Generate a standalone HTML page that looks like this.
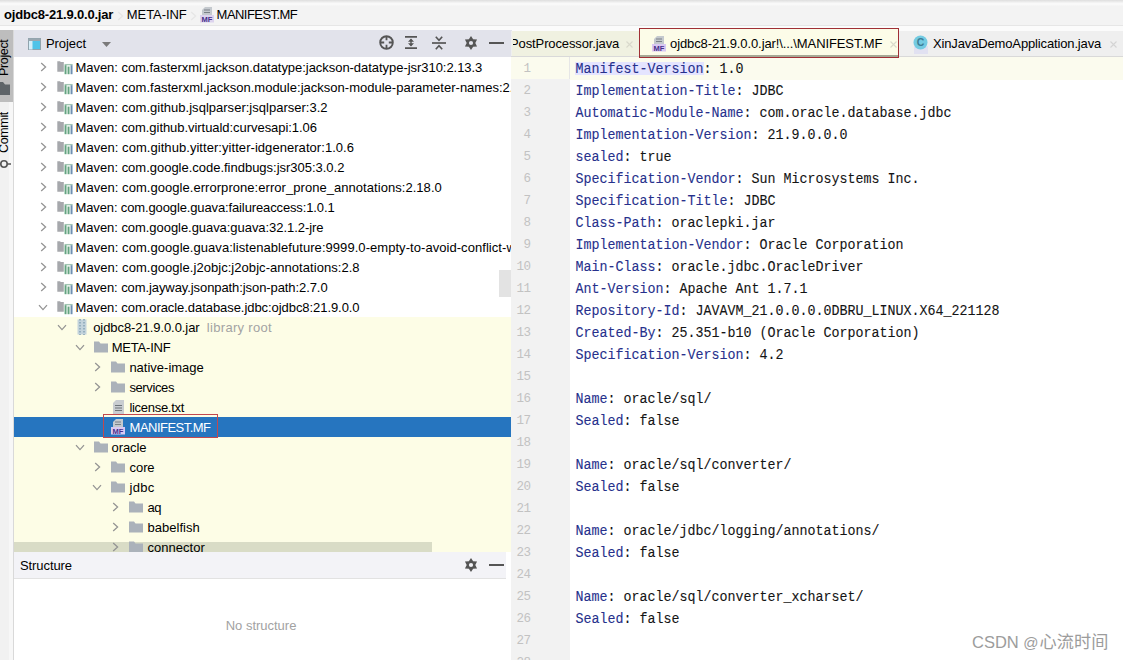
<!DOCTYPE html><html><head><meta charset="utf-8"><title>MANIFEST.MF</title><style>
*{box-sizing:border-box;margin:0;padding:0}
html,body{width:1123px;height:660px;overflow:hidden;background:#fff}
body{position:relative;font-family:"Liberation Sans","Noto Sans CJK SC",sans-serif;font-size:13px;color:#000}
.a{position:absolute}
.t{position:absolute;height:20px;line-height:20px;white-space:nowrap}
#nav{left:0;top:0;width:1123px;height:30px;background:#f3f3f3}
#navtop{left:0;top:0;width:1123px;height:6px;background:linear-gradient(#dedede 0,#ececec 30%,#f9f9f9 55%,#f9f9f9 80%,#f3f3f3 100%)}
#navline{left:0;top:24.5px;width:1123px;height:5.5px;background:linear-gradient(#e6e6e6 0,#e6e6e6 27%,#fbfbfb 28%,#fbfbfb 100%)}
#strip{left:0;top:30px;width:14px;height:630px;background:linear-gradient(to right,#f1f1f1 0,#f1f1f1 8.5px,#f7f7f7 9.5px,#f7f7f7 100%);border-right:1px solid #d9d9d9}
#stripsel{left:0;top:30px;width:13px;height:72px;background:#bdbdbd}
.vt{position:absolute;transform-origin:0 0;transform:rotate(-90deg);white-space:nowrap;font-size:12.5px;letter-spacing:-0.35px;line-height:14px;height:14px}
#phead{left:14px;top:30px;width:497.5px;height:27px;background:#e2e3eb}
#tree{left:14px;top:57px;width:497px;height:495px;background:#fff;overflow:hidden}
#treey{left:14px;top:317px;width:497px;height:235px;background:#fdfde6}
#sel{left:14px;top:417px;width:497px;height:20px;background:#2675bf}
#redbox{left:103px;top:414px;width:115px;height:24px;border:1px solid #c2484e}
#hsb{left:14px;top:542px;width:497px;height:10px;background:#f6f6e0}
#hthumb{left:14px;top:542px;width:418px;height:10px;background:#d9dcc6}
#vthumb{left:499px;top:269.5px;width:12px;height:27px;background:#e3e3e3}
#shead{left:14px;top:552px;width:492px;height:27.6px;background:#f3f3f7;border-bottom:2.4px solid #e2e2e2}
#sbody{left:14px;top:579px;width:497px;height:81px;background:#fff}
#tabs{left:511px;top:30.6px;width:612px;height:26.4px;background:#efefef;border-bottom:1px solid #d9d9d9}
#tab1{left:511.5px;top:31px;width:128px;height:25px;background:#f0f1e1}
#tab2{left:639.2px;top:27.8px;width:260px;height:30px;background:#fcfce8;border:1.5px solid #a02f35;box-shadow:inset 0 -2px 0 #a6a996}
#gutter{left:511px;top:57px;width:59px;height:603px;background:#f2f2f2;border-right:1px solid #e6e6e6}
#editor{left:570px;top:57px;width:553px;height:603px;background:#fff}
#caret{left:511px;top:57px;width:612px;height:22.5px;background:#fbfbee}
#idhl{left:575px;top:62px;width:129px;height:13px;background:#e4e4ff}
.ln{position:absolute;left:511px;width:19.5px;text-align:right;height:22px;line-height:22px;font-family:"Liberation Mono",monospace;font-size:12.5px;color:#c2c2c2;letter-spacing:-0.5px;margin-top:1px}
.cl{position:absolute;left:575.5px;margin-top:1.5px;transform:scaleY(1.1);transform-origin:0 66%;-webkit-text-stroke:0.1px;height:22px;line-height:22px;font-family:"Liberation Mono",monospace;font-size:13.333px;white-space:pre;color:#141414}
.k{color:#26308c}
#wm{position:absolute;left:972px;top:631px;font-size:16.5px;line-height:22px;color:#9c9c9c;white-space:nowrap;text-shadow:0 0 2px #fff}
svg{position:absolute;overflow:visible}
</style></head><body>
<div id="nav" class="a"></div><div id="navtop" class="a"></div><div id="navline" class="a"></div>
<div id="strip" class="a"></div><div id="stripsel" class="a"></div>
<div class="vt" style="left:-3px;top:75.5px">Project</div>
<div class="vt" style="left:-3px;top:152.5px">Commit</div>
<svg style="left:-4px;top:82px" width="14" height="13"><path d="M0 0 H7 L9 2.5 H14 V13 H0 Z" fill="#5e6468"/></svg>
<svg style="left:-2px;top:158px" width="12" height="14"><circle cx="6" cy="6" r="3.2" fill="none" stroke="#555" stroke-width="1.6"/><path d="M9 6 H13 M-1 6 H3" stroke="#555" stroke-width="1.6"/></svg>
<div id="phead" class="a"></div>
<div id="tree" class="a"></div><div id="treey" class="a"></div><div id="sel" class="a"></div>
<div class="a" style="left:511.5px;top:29px;width:612px;height:2px;background:#fbfbfb"></div><div id="tabs" class="a"></div><div id="tab1" class="a"></div>
<div id="editor" class="a"></div><div id="caret" class="a"></div><div id="gutter" class="a" style="background:transparent"></div>
<div class="a" style="left:511px;top:79px;width:59px;height:581px;background:#f2f2f2"></div>
<div id="idhl" class="a"></div><div id="tab2" class="a"></div>
<div id="hthumb" class="a"></div>
<div class="a" style="left:0;top:0;width:510.5px;height:552px;overflow:hidden">
<span class="t" style="left:75.5px;top:57.5px;letter-spacing:-0.043px;">Maven: com.fasterxml.jackson.datatype:jackson-datatype-jsr310:2.13.3</span>
<span class="t" style="left:75.5px;top:77.5px;letter-spacing:0.012px;">Maven: com.fasterxml.jackson.module:jackson-module-parameter-names:2.13.3</span>
<span class="t" style="left:75.5px;top:97.5px;letter-spacing:0.015px;">Maven: com.github.jsqlparser:jsqlparser:3.2</span>
<span class="t" style="left:75.5px;top:117.5px;letter-spacing:-0.050px;">Maven: com.github.virtuald:curvesapi:1.06</span>
<span class="t" style="left:75.5px;top:137.5px;letter-spacing:0.052px;">Maven: com.github.yitter:yitter-idgenerator:1.0.6</span>
<span class="t" style="left:75.5px;top:157.5px;letter-spacing:-0.015px;">Maven: com.google.code.findbugs:jsr305:3.0.2</span>
<span class="t" style="left:75.5px;top:177.5px;letter-spacing:0.048px;">Maven: com.google.errorprone:error_prone_annotations:2.18.0</span>
<span class="t" style="left:75.5px;top:197.5px;letter-spacing:-0.128px;">Maven: com.google.guava:failureaccess:1.0.1</span>
<span class="t" style="left:75.5px;top:217.5px;letter-spacing:-0.052px;">Maven: com.google.guava:guava:32.1.2-jre</span>
<span class="t" style="left:75.5px;top:237.5px;letter-spacing:0.053px;">Maven: com.google.guava:listenablefuture:9999.0-empty-to-avoid-conflict-with-guava</span>
<span class="t" style="left:75.5px;top:257.5px;letter-spacing:0.049px;">Maven: com.google.j2objc:j2objc-annotations:2.8</span>
<span class="t" style="left:75.5px;top:277.5px;letter-spacing:-0.084px;">Maven: com.jayway.jsonpath:json-path:2.7.0</span>
<span class="t" style="left:75.5px;top:297.5px;letter-spacing:-0.061px;">Maven: com.oracle.database.jdbc:ojdbc8:21.9.0.0</span>
<span class="t" style="left:93.2px;top:317.5px;letter-spacing:-0.066px;">ojdbc8-21.9.0.0.jar</span>
<span class="t" style="left:206.8px;top:317.5px;letter-spacing:0.318px;color:#a3a3a3;">library root</span>
<span class="t" style="left:111.7px;top:337.5px;letter-spacing:-0.202px;">META-INF</span>
<span class="t" style="left:129.4px;top:357.5px;letter-spacing:-0.002px;">native-image</span>
<span class="t" style="left:129.4px;top:377.5px;letter-spacing:-0.382px;">services</span>
<span class="t" style="left:129.4px;top:397.5px;letter-spacing:-0.290px;">license.txt</span>
<span class="t" style="left:129.6px;top:417.5px;letter-spacing:-0.526px;color:#fff;">MANIFEST.MF</span>
<span class="t" style="left:111.5px;top:437.5px;letter-spacing:-0.081px;">oracle</span>
<span class="t" style="left:129.6px;top:457.5px;letter-spacing:-0.096px;">core</span>
<span class="t" style="left:129.6px;top:477.5px;letter-spacing:0.284px;">jdbc</span>
<span class="t" style="left:147.6px;top:497.5px;letter-spacing:-0.560px;">aq</span>
<span class="t" style="left:147.6px;top:517.5px;letter-spacing:0.008px;">babelfish</span>
<span class="t" style="left:147.6px;top:537.5px;letter-spacing:0.014px;">connector</span>
<svg style="left:40.0px;top:62.0px" width="7" height="10"><path d="M1.2 1 L5.6 5 L1.2 9" fill="none" stroke="#939393" stroke-width="1.25"/></svg>
<svg style="left:56.5px;top:59.0px" width="16" height="16"><path d="M0.3 2.2 H3 L3.8 3 H6.8 V12.8 H0.3 Z" fill="#a6a8ac"/><rect x="7.2" y="4.6" width="8.6" height="10.6" fill="#f4faf6"/><rect x="7.6" y="5.2" width="8" height="1" fill="#8db8a2"/><rect x="7.6" y="6.2" width="1.9" height="9" fill="#64a380"/><rect x="10.6" y="7.6" width="1.9" height="7.6" fill="#64a380"/><rect x="13.6" y="6.2" width="1.9" height="9" fill="#6f8fb3"/></svg>
<svg style="left:40.0px;top:82.0px" width="7" height="10"><path d="M1.2 1 L5.6 5 L1.2 9" fill="none" stroke="#939393" stroke-width="1.25"/></svg>
<svg style="left:56.5px;top:79.0px" width="16" height="16"><path d="M0.3 2.2 H3 L3.8 3 H6.8 V12.8 H0.3 Z" fill="#a6a8ac"/><rect x="7.2" y="4.6" width="8.6" height="10.6" fill="#f4faf6"/><rect x="7.6" y="5.2" width="8" height="1" fill="#8db8a2"/><rect x="7.6" y="6.2" width="1.9" height="9" fill="#64a380"/><rect x="10.6" y="7.6" width="1.9" height="7.6" fill="#64a380"/><rect x="13.6" y="6.2" width="1.9" height="9" fill="#6f8fb3"/></svg>
<svg style="left:40.0px;top:102.0px" width="7" height="10"><path d="M1.2 1 L5.6 5 L1.2 9" fill="none" stroke="#939393" stroke-width="1.25"/></svg>
<svg style="left:56.5px;top:99.0px" width="16" height="16"><path d="M0.3 2.2 H3 L3.8 3 H6.8 V12.8 H0.3 Z" fill="#a6a8ac"/><rect x="7.2" y="4.6" width="8.6" height="10.6" fill="#f4faf6"/><rect x="7.6" y="5.2" width="8" height="1" fill="#8db8a2"/><rect x="7.6" y="6.2" width="1.9" height="9" fill="#64a380"/><rect x="10.6" y="7.6" width="1.9" height="7.6" fill="#64a380"/><rect x="13.6" y="6.2" width="1.9" height="9" fill="#6f8fb3"/></svg>
<svg style="left:40.0px;top:122.0px" width="7" height="10"><path d="M1.2 1 L5.6 5 L1.2 9" fill="none" stroke="#939393" stroke-width="1.25"/></svg>
<svg style="left:56.5px;top:119.0px" width="16" height="16"><path d="M0.3 2.2 H3 L3.8 3 H6.8 V12.8 H0.3 Z" fill="#a6a8ac"/><rect x="7.2" y="4.6" width="8.6" height="10.6" fill="#f4faf6"/><rect x="7.6" y="5.2" width="8" height="1" fill="#8db8a2"/><rect x="7.6" y="6.2" width="1.9" height="9" fill="#64a380"/><rect x="10.6" y="7.6" width="1.9" height="7.6" fill="#64a380"/><rect x="13.6" y="6.2" width="1.9" height="9" fill="#6f8fb3"/></svg>
<svg style="left:40.0px;top:142.0px" width="7" height="10"><path d="M1.2 1 L5.6 5 L1.2 9" fill="none" stroke="#939393" stroke-width="1.25"/></svg>
<svg style="left:56.5px;top:139.0px" width="16" height="16"><path d="M0.3 2.2 H3 L3.8 3 H6.8 V12.8 H0.3 Z" fill="#a6a8ac"/><rect x="7.2" y="4.6" width="8.6" height="10.6" fill="#f4faf6"/><rect x="7.6" y="5.2" width="8" height="1" fill="#8db8a2"/><rect x="7.6" y="6.2" width="1.9" height="9" fill="#64a380"/><rect x="10.6" y="7.6" width="1.9" height="7.6" fill="#64a380"/><rect x="13.6" y="6.2" width="1.9" height="9" fill="#6f8fb3"/></svg>
<svg style="left:40.0px;top:162.0px" width="7" height="10"><path d="M1.2 1 L5.6 5 L1.2 9" fill="none" stroke="#939393" stroke-width="1.25"/></svg>
<svg style="left:56.5px;top:159.0px" width="16" height="16"><path d="M0.3 2.2 H3 L3.8 3 H6.8 V12.8 H0.3 Z" fill="#a6a8ac"/><rect x="7.2" y="4.6" width="8.6" height="10.6" fill="#f4faf6"/><rect x="7.6" y="5.2" width="8" height="1" fill="#8db8a2"/><rect x="7.6" y="6.2" width="1.9" height="9" fill="#64a380"/><rect x="10.6" y="7.6" width="1.9" height="7.6" fill="#64a380"/><rect x="13.6" y="6.2" width="1.9" height="9" fill="#6f8fb3"/></svg>
<svg style="left:40.0px;top:182.0px" width="7" height="10"><path d="M1.2 1 L5.6 5 L1.2 9" fill="none" stroke="#939393" stroke-width="1.25"/></svg>
<svg style="left:56.5px;top:179.0px" width="16" height="16"><path d="M0.3 2.2 H3 L3.8 3 H6.8 V12.8 H0.3 Z" fill="#a6a8ac"/><rect x="7.2" y="4.6" width="8.6" height="10.6" fill="#f4faf6"/><rect x="7.6" y="5.2" width="8" height="1" fill="#8db8a2"/><rect x="7.6" y="6.2" width="1.9" height="9" fill="#64a380"/><rect x="10.6" y="7.6" width="1.9" height="7.6" fill="#64a380"/><rect x="13.6" y="6.2" width="1.9" height="9" fill="#6f8fb3"/></svg>
<svg style="left:40.0px;top:202.0px" width="7" height="10"><path d="M1.2 1 L5.6 5 L1.2 9" fill="none" stroke="#939393" stroke-width="1.25"/></svg>
<svg style="left:56.5px;top:199.0px" width="16" height="16"><path d="M0.3 2.2 H3 L3.8 3 H6.8 V12.8 H0.3 Z" fill="#a6a8ac"/><rect x="7.2" y="4.6" width="8.6" height="10.6" fill="#f4faf6"/><rect x="7.6" y="5.2" width="8" height="1" fill="#8db8a2"/><rect x="7.6" y="6.2" width="1.9" height="9" fill="#64a380"/><rect x="10.6" y="7.6" width="1.9" height="7.6" fill="#64a380"/><rect x="13.6" y="6.2" width="1.9" height="9" fill="#6f8fb3"/></svg>
<svg style="left:40.0px;top:222.0px" width="7" height="10"><path d="M1.2 1 L5.6 5 L1.2 9" fill="none" stroke="#939393" stroke-width="1.25"/></svg>
<svg style="left:56.5px;top:219.0px" width="16" height="16"><path d="M0.3 2.2 H3 L3.8 3 H6.8 V12.8 H0.3 Z" fill="#a6a8ac"/><rect x="7.2" y="4.6" width="8.6" height="10.6" fill="#f4faf6"/><rect x="7.6" y="5.2" width="8" height="1" fill="#8db8a2"/><rect x="7.6" y="6.2" width="1.9" height="9" fill="#64a380"/><rect x="10.6" y="7.6" width="1.9" height="7.6" fill="#64a380"/><rect x="13.6" y="6.2" width="1.9" height="9" fill="#6f8fb3"/></svg>
<svg style="left:40.0px;top:242.0px" width="7" height="10"><path d="M1.2 1 L5.6 5 L1.2 9" fill="none" stroke="#939393" stroke-width="1.25"/></svg>
<svg style="left:56.5px;top:239.0px" width="16" height="16"><path d="M0.3 2.2 H3 L3.8 3 H6.8 V12.8 H0.3 Z" fill="#a6a8ac"/><rect x="7.2" y="4.6" width="8.6" height="10.6" fill="#f4faf6"/><rect x="7.6" y="5.2" width="8" height="1" fill="#8db8a2"/><rect x="7.6" y="6.2" width="1.9" height="9" fill="#64a380"/><rect x="10.6" y="7.6" width="1.9" height="7.6" fill="#64a380"/><rect x="13.6" y="6.2" width="1.9" height="9" fill="#6f8fb3"/></svg>
<svg style="left:40.0px;top:262.0px" width="7" height="10"><path d="M1.2 1 L5.6 5 L1.2 9" fill="none" stroke="#939393" stroke-width="1.25"/></svg>
<svg style="left:56.5px;top:259.0px" width="16" height="16"><path d="M0.3 2.2 H3 L3.8 3 H6.8 V12.8 H0.3 Z" fill="#a6a8ac"/><rect x="7.2" y="4.6" width="8.6" height="10.6" fill="#f4faf6"/><rect x="7.6" y="5.2" width="8" height="1" fill="#8db8a2"/><rect x="7.6" y="6.2" width="1.9" height="9" fill="#64a380"/><rect x="10.6" y="7.6" width="1.9" height="7.6" fill="#64a380"/><rect x="13.6" y="6.2" width="1.9" height="9" fill="#6f8fb3"/></svg>
<svg style="left:40.0px;top:282.0px" width="7" height="10"><path d="M1.2 1 L5.6 5 L1.2 9" fill="none" stroke="#939393" stroke-width="1.25"/></svg>
<svg style="left:56.5px;top:279.0px" width="16" height="16"><path d="M0.3 2.2 H3 L3.8 3 H6.8 V12.8 H0.3 Z" fill="#a6a8ac"/><rect x="7.2" y="4.6" width="8.6" height="10.6" fill="#f4faf6"/><rect x="7.6" y="5.2" width="8" height="1" fill="#8db8a2"/><rect x="7.6" y="6.2" width="1.9" height="9" fill="#64a380"/><rect x="10.6" y="7.6" width="1.9" height="7.6" fill="#64a380"/><rect x="13.6" y="6.2" width="1.9" height="9" fill="#6f8fb3"/></svg>
<svg style="left:38.0px;top:304.0px" width="10" height="7"><path d="M1 1.2 L5 5.6 L9 1.2" fill="none" stroke="#939393" stroke-width="1.25"/></svg>
<svg style="left:56.5px;top:299.0px" width="16" height="16"><path d="M0.3 2.2 H3 L3.8 3 H6.8 V12.8 H0.3 Z" fill="#a6a8ac"/><rect x="7.2" y="4.6" width="8.6" height="10.6" fill="#f4faf6"/><rect x="7.6" y="5.2" width="8" height="1" fill="#8db8a2"/><rect x="7.6" y="6.2" width="1.9" height="9" fill="#64a380"/><rect x="10.6" y="7.6" width="1.9" height="7.6" fill="#64a380"/><rect x="13.6" y="6.2" width="1.9" height="9" fill="#6f8fb3"/></svg>
<svg style="left:56.5px;top:324.0px" width="10" height="7"><path d="M1 1.2 L5 5.6 L9 1.2" fill="none" stroke="#939393" stroke-width="1.25"/></svg>
<svg style="left:77.0px;top:319.0px" width="10" height="16"><rect x="0.5" y="0.5" width="9" height="15" fill="#c3d3dc"/><path d="M3 0 V16 M7 0 V16" stroke="#8aa7b8" stroke-width="1.6" stroke-dasharray="1.5 1.5"/></svg>
<svg style="left:74.5px;top:344.0px" width="10" height="7"><path d="M1 1.2 L5 5.6 L9 1.2" fill="none" stroke="#939393" stroke-width="1.25"/></svg>
<svg style="left:93.5px;top:340.5px" width="14" height="12"><path d="M0 0.5 H5 L6.5 2.5 H14 V11.5 H0 Z" fill="#abb2ba"/></svg>
<svg style="left:94.3px;top:362.0px" width="7" height="10"><path d="M1.2 1 L5.6 5 L1.2 9" fill="none" stroke="#939393" stroke-width="1.25"/></svg>
<svg style="left:111.3px;top:360.5px" width="14" height="12"><path d="M0 0.5 H5 L6.5 2.5 H14 V11.5 H0 Z" fill="#abb2ba"/></svg>
<svg style="left:94.3px;top:382.0px" width="7" height="10"><path d="M1.2 1 L5.6 5 L1.2 9" fill="none" stroke="#939393" stroke-width="1.25"/></svg>
<svg style="left:111.3px;top:380.5px" width="14" height="12"><path d="M0 0.5 H5 L6.5 2.5 H14 V11.5 H0 Z" fill="#abb2ba"/></svg>
<svg style="left:113.0px;top:399.5px" width="11" height="14"><path d="M3 0 H11 V14 H0 V3 Z" fill="#c9cdd1"/><path d="M2 5.5 H9 M2 8 H9 M2 10.5 H9" stroke="#6e747a" stroke-width="1.2"/></svg>
<svg style="left:111.0px;top:419.0px" width="14" height="16"><path d="M5 0 H12 V8 H2 V3 Z" fill="#c4c9ce"/><path d="M4 3 H10 M4 5.5 H10" stroke="#7a8087" stroke-width="1.1"/><rect x="0" y="8" width="14" height="7.5" fill="#d9c8f2"/><text x="7" y="14.6" font-size="7.5" font-weight="bold" text-anchor="middle" fill="#47308a" font-family="Liberation Sans, sans-serif">MF</text></svg>
<svg style="left:74.5px;top:444.0px" width="10" height="7"><path d="M1 1.2 L5 5.6 L9 1.2" fill="none" stroke="#939393" stroke-width="1.25"/></svg>
<svg style="left:93.5px;top:440.5px" width="14" height="12"><path d="M0 0.5 H5 L6.5 2.5 H14 V11.5 H0 Z" fill="#abb2ba"/></svg>
<svg style="left:94.3px;top:462.0px" width="7" height="10"><path d="M1.2 1 L5.6 5 L1.2 9" fill="none" stroke="#939393" stroke-width="1.25"/></svg>
<svg style="left:111.3px;top:460.5px" width="14" height="12"><path d="M0 0.5 H5 L6.5 2.5 H14 V11.5 H0 Z" fill="#abb2ba"/></svg>
<svg style="left:92.3px;top:484.0px" width="10" height="7"><path d="M1 1.2 L5 5.6 L9 1.2" fill="none" stroke="#939393" stroke-width="1.25"/></svg>
<svg style="left:111.3px;top:480.5px" width="14" height="12"><path d="M0 0.5 H5 L6.5 2.5 H14 V11.5 H0 Z" fill="#abb2ba"/></svg>
<svg style="left:112.2px;top:502.0px" width="7" height="10"><path d="M1.2 1 L5.6 5 L1.2 9" fill="none" stroke="#939393" stroke-width="1.25"/></svg>
<svg style="left:129.2px;top:500.5px" width="14" height="12"><path d="M0 0.5 H5 L6.5 2.5 H14 V11.5 H0 Z" fill="#abb2ba"/></svg>
<svg style="left:112.2px;top:522.0px" width="7" height="10"><path d="M1.2 1 L5.6 5 L1.2 9" fill="none" stroke="#939393" stroke-width="1.25"/></svg>
<svg style="left:129.2px;top:520.5px" width="14" height="12"><path d="M0 0.5 H5 L6.5 2.5 H14 V11.5 H0 Z" fill="#abb2ba"/></svg>
<svg style="left:112.2px;top:542.0px" width="7" height="10"><path d="M1.2 1 L5.6 5 L1.2 9" fill="none" stroke="#939393" stroke-width="1.25"/></svg>
<svg style="left:129.2px;top:540.5px" width="14" height="12"><path d="M0 0.5 H5 L6.5 2.5 H14 V11.5 H0 Z" fill="#abb2ba"/></svg>
</div>
<div id="redbox" class="a"></div>
<div id="vthumb" class="a"></div>
<div id="shead" class="a"></div><div id="sbody" class="a"></div>
<span class="t" style="left:4.0px;top:5.3px;letter-spacing:-0.185px;font-weight:bold;">ojdbc8-21.9.0.0.jar</span>
<span class="t" style="left:126.8px;top:5.3px;letter-spacing:-0.074px;">META-INF</span>
<span class="t" style="left:216.6px;top:5.3px;letter-spacing:-0.546px;">MANIFEST.MF</span>
<span class="t" style="left:46.0px;top:34.0px;letter-spacing:-0.077px;">Project</span>
<span class="t" style="left:20.0px;top:555.5px;letter-spacing:-0.093px;">Structure</span>
<span class="t" style="left:225.7px;top:615.8px;letter-spacing:-0.009px;color:#a2a2a2;">No structure</span>
<div class="a" style="left:513.4px;top:29px;width:118.6px;height:28px;overflow:hidden"><span class="t" style="right:12.8px;top:4.5px;letter-spacing:-0.12px">PostProcessor.java</span></div>
<span class="t" style="left:670.0px;top:34.0px;letter-spacing:-0.100px;">ojdbc8-21.9.0.0.jar!\...\MANIFEST.MF</span>
<span class="t" style="left:933.0px;top:34.0px;letter-spacing:-0.142px;">XinJavaDemoApplication.java</span>
<svg style="left:199.5px;top:7.0px" width="14" height="16"><path d="M5 0 H12 V8 H2 V3 Z" fill="#c4c9ce"/><path d="M4 3 H10 M4 5.5 H10" stroke="#7a8087" stroke-width="1.1"/><rect x="0" y="8" width="14" height="7.5" fill="#dcd3ee"/><text x="7" y="14.6" font-size="7.5" font-weight="bold" text-anchor="middle" fill="#47308a" font-family="Liberation Sans, sans-serif">MF</text></svg>
<svg style="left:117.0px;top:10.5px" width="7" height="10"><path d="M1.2 1 L5.6 5 L1.2 9" fill="none" stroke="#e6e6e6" stroke-width="1.25"/></svg><svg style="left:190.0px;top:10.5px" width="7" height="10"><path d="M1.2 1 L5.6 5 L1.2 9" fill="none" stroke="#e6e6e6" stroke-width="1.25"/></svg>
<svg style="left:28px;top:38px" width="13" height="12"><rect x="0.5" y="0.5" width="12" height="11" fill="#4fc3e8" stroke="#8fa3ad"/><rect x="0.5" y="0.5" width="12" height="2.5" fill="#9aa7b0"/><rect x="1" y="3" width="3.5" height="8.5" fill="#d5eef8"/></svg>
<svg style="left:102px;top:42px" width="9" height="5"><path d="M0 0 H9 L4.5 5 Z" fill="#7a7a7a"/></svg>
<svg style="left:378.7px;top:35px" width="15" height="15"><circle cx="7.5" cy="7.5" r="6.3" fill="none" stroke="#555" stroke-width="1.9"/><path d="M7.5 1 V5.2 M7.5 9.8 V14 M1 7.5 H5.2 M9.8 7.5 H14" stroke="#555" stroke-width="1.8"/></svg>
<svg style="left:405px;top:36px" width="12" height="13"><path d="M0 0.9 H12 M0 12.1 H12" stroke="#555" stroke-width="1.7"/><path d="M6 3.5 V9.5" stroke="#555" stroke-width="1.4"/><path d="M3 5.8 L6 2.6 L9 5.8 Z M3 7.2 L6 10.4 L9 7.2 Z" fill="#555"/></svg>
<svg style="left:431.5px;top:35.5px" width="14" height="14"><path d="M0 7 H14" stroke="#555" stroke-width="1.7"/><path d="M3.8 0.8 L7 4.4 L10.2 0.8 M3.8 13.2 L7 9.6 L10.2 13.2" fill="none" stroke="#555" stroke-width="1.6"/></svg>
<svg style="left:464.2px;top:35.7px" width="14" height="14"><g transform="translate(7 7)"><path d="M0.00,-7.00 L2.15,-3.72 L6.06,-3.50 L4.30,0.00 L6.06,3.50 L2.15,3.72 L0.00,7.00 L-2.15,3.72 L-6.06,3.50 L-4.30,0.00 L-6.06,-3.50 L-2.15,-3.72 Z M2.1 0 A2.1 2.1 0 1 0 -2.1 0 A2.1 2.1 0 1 0 2.1 0 Z" fill="#555" fill-rule="evenodd"/></g></svg>
<svg style="left:464px;top:557.8px" width="14" height="14"><g transform="translate(7 7)"><path d="M0.00,-7.00 L2.15,-3.72 L6.06,-3.50 L4.30,0.00 L6.06,3.50 L2.15,3.72 L0.00,7.00 L-2.15,3.72 L-6.06,3.50 L-4.30,0.00 L-6.06,-3.50 L-2.15,-3.72 Z M2.1 0 A2.1 2.1 0 1 0 -2.1 0 A2.1 2.1 0 1 0 2.1 0 Z" fill="#555" fill-rule="evenodd"/></g></svg>
<div class="a" style="left:488.5px;top:41.6px;width:15.5px;height:2px;background:#555"></div>
<div class="a" style="left:488.5px;top:563.8px;width:15.5px;height:2px;background:#555"></div>
<svg style="left:651.5px;top:35.5px" width="14" height="16"><path d="M5 0 H12 V8 H2 V3 Z" fill="#c4c9ce"/><path d="M4 3 H10 M4 5.5 H10" stroke="#7a8087" stroke-width="1.1"/><rect x="0" y="8" width="14" height="7.5" fill="#d9c8f2"/><text x="7" y="14.6" font-size="7.5" font-weight="bold" text-anchor="middle" fill="#47308a" font-family="Liberation Sans, sans-serif">MF</text></svg>
<svg style="left:913px;top:34.5px" width="16" height="20"><rect x="1" y="11" width="14" height="8" fill="#dcdcf2" opacity=".7"/><circle cx="7.5" cy="7.5" r="7" fill="#74cbe2"/><text x="7.6" y="11.2" font-size="10.5" font-weight="bold" text-anchor="middle" fill="#3d7d96" font-family="Liberation Sans, sans-serif">C</text></svg>
<svg style="left:626px;top:41px" width="7" height="7"><path d="M0.5 0.5 L6.5 6.5 M6.5 0.5 L0.5 6.5" stroke="#d9d9cc" stroke-width="1.1"/></svg>
<svg style="left:890px;top:41px" width="7" height="7"><path d="M0.5 0.5 L6.5 6.5 M6.5 0.5 L0.5 6.5" stroke="#dadacb" stroke-width="1.1"/></svg>
<svg style="left:1110px;top:41px" width="7" height="7"><path d="M0.5 0.5 L6.5 6.5 M6.5 0.5 L0.5 6.5" stroke="#d4d4d4" stroke-width="1.1"/></svg>
<div class="ln" style="top:57px">1</div>
<div class="cl" style="top:57px"><span class="k">Manifest-Version</span>: 1.0</div>
<div class="ln" style="top:79px">2</div>
<div class="cl" style="top:79px"><span class="k">Implementation-Title</span>: JDBC</div>
<div class="ln" style="top:101px">3</div>
<div class="cl" style="top:101px"><span class="k">Automatic-Module-Name</span>: com.oracle.database.jdbc</div>
<div class="ln" style="top:123px">4</div>
<div class="cl" style="top:123px"><span class="k">Implementation-Version</span>: 21.9.0.0.0</div>
<div class="ln" style="top:145px">5</div>
<div class="cl" style="top:145px"><span class="k">sealed</span>: true</div>
<div class="ln" style="top:167px">6</div>
<div class="cl" style="top:167px"><span class="k">Specification-Vendor</span>: Sun Microsystems Inc.</div>
<div class="ln" style="top:189px">7</div>
<div class="cl" style="top:189px"><span class="k">Specification-Title</span>: JDBC</div>
<div class="ln" style="top:211px">8</div>
<div class="cl" style="top:211px"><span class="k">Class-Path</span>: oraclepki.jar</div>
<div class="ln" style="top:233px">9</div>
<div class="cl" style="top:233px"><span class="k">Implementation-Vendor</span>: Oracle Corporation</div>
<div class="ln" style="top:255px">10</div>
<div class="cl" style="top:255px"><span class="k">Main-Class</span>: oracle.jdbc.OracleDriver</div>
<div class="ln" style="top:277px">11</div>
<div class="cl" style="top:277px"><span class="k">Ant-Version</span>: Apache Ant 1.7.1</div>
<div class="ln" style="top:299px">12</div>
<div class="cl" style="top:299px"><span class="k">Repository-Id</span>: JAVAVM_21.0.0.0.0DBRU_LINUX.X64_221128</div>
<div class="ln" style="top:321px">13</div>
<div class="cl" style="top:321px"><span class="k">Created-By</span>: 25.351-b10 (Oracle Corporation)</div>
<div class="ln" style="top:343px">14</div>
<div class="cl" style="top:343px"><span class="k">Specification-Version</span>: 4.2</div>
<div class="ln" style="top:365px">15</div>
<div class="ln" style="top:387px">16</div>
<div class="cl" style="top:387px"><span class="k">Name</span>: oracle/sql/</div>
<div class="ln" style="top:409px">17</div>
<div class="cl" style="top:409px"><span class="k">Sealed</span>: false</div>
<div class="ln" style="top:431px">18</div>
<div class="ln" style="top:453px">19</div>
<div class="cl" style="top:453px"><span class="k">Name</span>: oracle/sql/converter/</div>
<div class="ln" style="top:475px">20</div>
<div class="cl" style="top:475px"><span class="k">Sealed</span>: false</div>
<div class="ln" style="top:497px">21</div>
<div class="ln" style="top:519px">22</div>
<div class="cl" style="top:519px"><span class="k">Name</span>: oracle/jdbc/logging/annotations/</div>
<div class="ln" style="top:541px">23</div>
<div class="cl" style="top:541px"><span class="k">Sealed</span>: false</div>
<div class="ln" style="top:563px">24</div>
<div class="ln" style="top:585px">25</div>
<div class="cl" style="top:585px"><span class="k">Name</span>: oracle/sql/converter_xcharset/</div>
<div class="ln" style="top:607px">26</div>
<div class="cl" style="top:607px"><span class="k">Sealed</span>: false</div>
<div class="ln" style="top:629px">27</div>
<div class="ln" style="top:651px">28</div>
<div id="wm">CSDN <span style="font-size:15px;letter-spacing:1px">@</span><span style="font-size:17.2px">心流时间</span></div>
</body></html>
